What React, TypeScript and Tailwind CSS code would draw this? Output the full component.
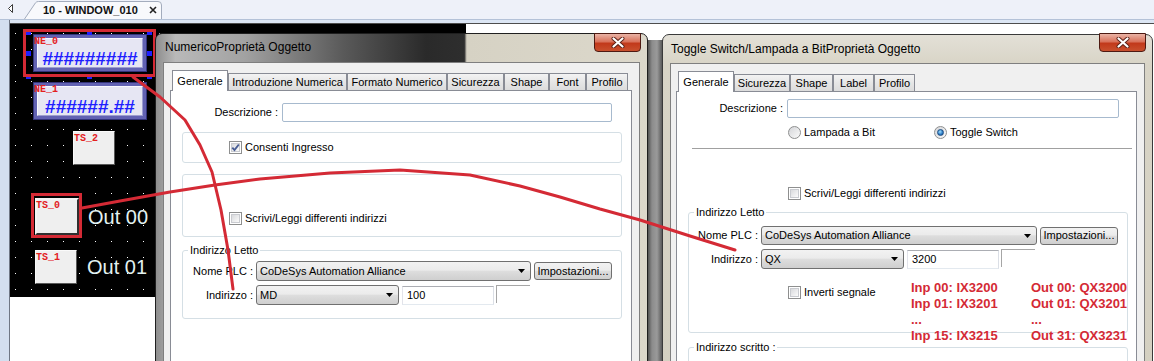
const red = "#d42a35";

function Check({ checked = false }: { checked?: boolean }) {
  return (
    <span className="relative inline-flex h-[13px] w-[13px] shrink-0 items-center justify-center border border-[#8e8f8f] bg-white">
      <span className="h-[9px] w-[9px] border border-[#c9cbd0] bg-gradient-to-br from-[#d9dadd] to-[#fbfbfb]" />
      {checked && (
        <svg className="absolute left-0 top-0" width="11" height="11" viewBox="0 0 11 11">
          <path d="M2.3 5.6 L4.5 8.1 L8.8 2.5" fill="none" stroke="#485d94" strokeWidth="1.9" />
        </svg>
      )}
    </span>
  );
}

function Radio({ on = false }: { on?: boolean }) {
  return (
    <span className="inline-flex h-[13px] w-[13px] shrink-0 items-center justify-center rounded-full border border-[#8e8f8f] bg-gradient-to-br from-[#d4d5d8] to-[#fbfbfb]">
      {on && (
        <span className="h-[7px] w-[7px] rounded-full border border-[#1b4c82] bg-[radial-gradient(circle_at_40%_35%,#9fe0ff,#2b79c4_60%,#174f8c)]" />
      )}
    </span>
  );
}

function Arrow() {
  return (
    <svg width="7" height="4" viewBox="0 0 7 4" className="shrink-0">
      <polygon points="0,0 7,0 3.5,4" fill="#000" />
    </svg>
  );
}

function Combo({ value, className }: { value: string; className: string }) {
  return (
    <div
      className={`flex shrink-0 items-center justify-between rounded-[3px] border border-[#707070] bg-[linear-gradient(#f2f2f2,#ebebeb_45%,#dddddd_52%,#cfcfcf)] pl-[3px] pr-[5px] ${className}`}
    >
      <span className="whitespace-nowrap">{value}</span>
      <Arrow />
    </div>
  );
}

function TextBox({ value = "", className }: { value?: string; className: string }) {
  return (
    <div
      className={`flex shrink-0 items-center border border-[#abadb3] border-b-[#e3e9ef] border-l-[#e2e3ea] border-r-[#dbdfe6] bg-white pl-[4px] ${className}`}
    >
      {value}
    </div>
  );
}

function Partial() {
  return <div className="ml-[2px] h-[18px] w-[34px] shrink-0 self-start border-l border-t border-[#a6a6a6]" />;
}

function Btn({ label }: { label: string }) {
  return (
    <div className="ml-[3px] flex h-[18px] w-[78px] shrink-0 items-center justify-center rounded-[3px] border border-[#707070] bg-[linear-gradient(#f2f2f2,#ebebeb_45%,#dddddd_52%,#cfcfcf)]">
      {label}
    </div>
  );
}

function Tab({ label, active = false, w }: { label: string; active?: boolean; w: string }) {
  if (active) {
    return (
      <div
        className={`relative z-10 -mb-px flex h-[21px] shrink-0 items-center justify-center border border-b-0 border-[#898c95] bg-white ${w}`}
      >
        {label}
      </div>
    );
  }
  return (
    <div
      className={`flex h-[17px] shrink-0 items-center justify-center border border-b-0 border-[#898c95] bg-[linear-gradient(#f3f3f3,#e6e6e6_50%,#dcdcdc)] ${w}`}
    >
      {label}
    </div>
  );
}

function CloseBtn({ className }: { className: string }) {
  return (
    <div
      className={`flex h-[19px] w-[47px] shrink-0 items-center justify-center rounded-b-[4px] border border-[#4e1a12] bg-[linear-gradient(#eab4a6,#d9735c_45%,#c2391b_55%,#c8502e)] ${className}`}
    >
      <svg width="14" height="11" viewBox="0 0 14 11">
        <path d="M2.5 1.5 L11.5 9.5 M11.5 1.5 L2.5 9.5" stroke="#5a2016" strokeWidth="4" strokeLinecap="round" />
        <path d="M2.5 1.5 L11.5 9.5 M11.5 1.5 L2.5 9.5" stroke="#fff" strokeWidth="2.2" strokeLinecap="round" />
      </svg>
    </div>
  );
}

function Legend({ text, className }: { text: string; className: string }) {
  return (
    <span className={`absolute top-[-7px] bg-white px-[2px] leading-[13px] ${className}`}>{text}</span>
  );
}

function TabStrip() {
  return (
    <div className="flex h-[20px] shrink-0 items-end border-b border-[#b4c2d8] bg-[#eef1f9]">
      <svg width="24" height="19" viewBox="0 0 24 19" className="shrink-0">
        <path d="M12.5 4.5 L8.5 8.5 L12.5 12.5 Z" fill="#fff" stroke="#3a3a3a" />
      </svg>
      <div className="relative flex h-[18px] w-[138px] shrink-0 items-center pl-[19px]">
        <svg className="absolute inset-0" width="138" height="18" viewBox="0 0 138 18">
          <path d="M0.5 18 L11.5 1.8 Q12.5 0.5 14.5 0.5 L134 0.5 Q137.5 0.5 137.5 4 L137.5 18" fill="#f8f9fc" stroke="#a3acbd" />
        </svg>
        <span className="relative text-[11px] font-bold text-[#111]">10 - WINDOW_010</span>
        <svg className="relative ml-[11px]" width="8" height="8" viewBox="0 0 8 8">
          <path d="M1 1 L7 7 M7 1 L1 7" stroke="#222" strokeWidth="1.6" />
        </svg>
      </div>
    </div>
  );
}

function NumBox({ className, text }: { className: string; text: string }) {
  return (
    <div className={`absolute left-[23px] h-[38px] w-[114px] border border-[#33337a] bg-[#6262b2] p-[3px] ${className}`}>
      <div className="flex h-full items-end justify-center border border-[#9d9dcf] border-l-[#fafaff] border-t-[#fafaff] bg-[#e6e6f3] text-[19px] font-bold leading-[16px] text-[#1e1eff]">
        {text}
      </div>
    </div>
  );
}

const tag = "absolute font-['Liberation_Mono',monospace] text-[10px] font-bold leading-none text-[#e3201e]";

function Canvas() {
  const handles: [number, number][] = [
    [16, 6], [77, 6], [137, 6], [16, 27], [137, 27], [16, 50], [77, 50], [137, 50],
  ];
  return (
    <div className="relative h-[273px] w-[456px] bg-black">
      <svg className="absolute inset-0" width="456" height="273">
        <defs>
          <pattern id="dots" x="5" y="9" width="16" height="16" patternUnits="userSpaceOnUse">
            <rect width="1" height="1" fill="#fff" />
          </pattern>
        </defs>
        <rect width="456" height="273" fill="url(#dots)" />
      </svg>

      <NumBox className="top-[10px]" text="#########" />
      <NumBox className="top-[58px]" text="######.##" />
      {handles.map(([x, y]) => (
        <span key={`${x}-${y}`} className="absolute h-[5px] w-[5px] bg-[#2020ff]" style={{ left: x, top: y }} />
      ))}
      <span className={`${tag} left-[24px] top-[13px]`}>NE_0</span>
      <span className={`${tag} left-[24px] top-[61px]`}>NE_1</span>

      <div className="absolute left-[63px] top-[107px] h-[34px] w-[42px] border border-[#fafafa] border-b-[#585858] border-r-[#585858] bg-[#efefef]" />
      <span className={`${tag} left-[64px] top-[110px]`}>TS_2</span>

      <div className="absolute left-[25px] top-[174px] h-[37px] w-[44px] border-2 border-[#f5f5f5] border-b-[#303030] border-r-[#303030] bg-[#efefef]" />
      <span className={`${tag} left-[26px] top-[177px]`}>TS_0</span>
      <span className="absolute left-[78px] top-[181px] text-[20px] leading-[24px] text-[#e2f1f1]">Out 00</span>

      <div className="absolute left-[25px] top-[226px] h-[34px] w-[42px] border border-[#fafafa] border-b-[#585858] border-r-[#585858] bg-[#efefef]" />
      <span className={`${tag} left-[26px] top-[229px]`}>TS_1</span>
      <span className="absolute left-[77px] top-[231px] text-[20px] leading-[24px] text-[#e2f1f1]">Out 01</span>

      <div className="absolute left-[13px] top-[5px] h-[48px] w-[133px] border-[3px] border-[#d42a35]" />
      <div className="absolute left-[21px] top-[169px] h-[45px] w-[51px] border-[3px] border-[#d42a35]" />
    </div>
  );
}

function LeftDialog() {
  return (
    <div className="absolute left-[155px] top-[33px] flex h-[340px] w-[493px] flex-col rounded-t-[7px] border border-[#1f1f1f] bg-[linear-gradient(90deg,#8e8e8e_0%,#b9b9b9_4%,#a2a2a2_18%,#5a5a5a_38%,#2a2a2a_55%,#2e2e2e_62.8%,#d6d2c4_63.3%,#dcd8cb_100%)] px-[7px]">
      <div className="flex h-[28px] shrink-0 items-start justify-between">
        <span className="mt-[6px] pl-[2px] text-[12px] leading-[14px] text-black">NumericoProprietà Oggetto</span>
        <CloseBtn className="-mr-px -mt-px" />
      </div>
      <div className="flex flex-1 flex-col border border-[#7f7f7f] bg-[#f0f0f0] pl-[6px] pr-[7px] pt-[7px]">
        <div className="flex h-[20px] shrink-0 items-end pl-[2px]">
          <Tab label="Generale" active w="w-[56px]" />
          <Tab label="Introduzione Numerica" w="w-[119px]" />
          <Tab label="Formato Numerico" w="w-[100px]" />
          <Tab label="Sicurezza" w="w-[57px]" />
          <Tab label="Shape" w="w-[45px]" />
          <Tab label="Font" w="w-[37px]" />
          <Tab label="Profilo" w="w-[42px]" />
        </div>
        <div className="flex flex-1 flex-col border border-[#898c95] bg-white">
          <div className="mt-[12px] flex items-center">
            <span className="w-[107px] text-right">Descrizione :</span>
            <div className="ml-[4px] h-[19px] w-[330px] rounded-[2px] border border-[#a7bace] bg-white" />
          </div>
          <div className="ml-[11px] mt-[10px] flex h-[31px] w-[440px] items-center rounded-[3px] border border-[#d5dfe5] pl-[46px]">
            <Check checked />
            <span className="ml-[3px]">Consenti Ingresso</span>
          </div>
          <div className="ml-[11px] mt-[11px] flex h-[63px] w-[440px] items-start rounded-[3px] border border-[#d5dfe5] pl-[46px] pt-[37px]">
            <Check />
            <span className="ml-[3px] leading-[13px]">Scrivi/Leggi differenti indirizzi</span>
          </div>
          <div className="relative ml-[11px] mt-[13px] flex h-[69px] w-[440px] flex-col rounded-[3px] border border-[#d5dfe5] pt-[10px]">
            <Legend text="Indirizzo Letto" className="left-[5px]" />
            <div className="flex items-center">
              <span className="w-[70px] text-right">Nome PLC :</span>
              <Combo value="CoDeSys Automation Alliance" className="ml-[3px] h-[20px] w-[275px]" />
              <Btn label="Impostazioni..." />
            </div>
            <div className="mt-[4px] flex items-center">
              <span className="w-[70px] text-right">Indirizzo :</span>
              <Combo value="MD" className="ml-[3px] h-[20px] w-[143px]" />
              <TextBox value="100" className="ml-[3px] h-[19px] w-[92px]" />
              <Partial />
            </div>
          </div>
        </div>
      </div>
    </div>
  );
}

function RightDialog() {
  return (
    <div className="absolute left-[662px] top-[34px] flex h-[340px] w-[491px] flex-col rounded-t-[7px] border border-[#3a3a3a] bg-[linear-gradient(#e3e0d7,#d8d4c6_30px,#d4d0c1)] px-[7px]">
      <div className="flex h-[28px] shrink-0 items-start justify-between">
        <span className="mt-[7px] pl-[1px] text-[12px] leading-[14px] text-black">Toggle Switch/Lampada a BitProprietà Oggetto</span>
        <CloseBtn className="-mr-[1px] -mt-[2px]" />
      </div>
      <div className="flex flex-1 flex-col border border-[#7f7f7f] bg-[#f0f0f0] pl-[5px] pr-[7px] pt-[8px]">
        <div className="flex h-[19px] shrink-0 items-end pl-[2px]">
          <Tab label="Generale" active w="w-[56px]" />
          <Tab label="Sicurezza" w="w-[56px]" />
          <Tab label="Shape" w="w-[43px]" />
          <Tab label="Label" w="w-[41px]" />
          <Tab label="Profilo" w="w-[41px]" />
        </div>
        <div className="flex flex-1 flex-col border border-[#898c95] bg-white">
          <div className="mt-[7px] flex items-center">
            <span className="w-[106px] text-right">Descrizione :</span>
            <div className="ml-[4px] h-[19px] w-[332px] rounded-[2px] border border-[#a7bace] bg-white" />
          </div>
          <div className="mt-[8px] flex h-[13px] items-center pl-[111px]">
            <div className="flex w-[146px] items-center">
              <Radio />
              <span className="ml-[3px]">Lampada a Bit</span>
            </div>
            <Radio on />
            <span className="ml-[3px]">Toggle Switch</span>
          </div>
          <div className="ml-[15px] mt-[9px] w-[440px] border-b border-t border-b-white border-t-[#a0a0a0]" />
          <div className="mt-[37px] flex items-center pl-[111px]">
            <Check />
            <span className="ml-[3px] leading-[13px]">Scrivi/Leggi differenti indirizzi</span>
          </div>
          <div className="relative ml-[11px] mt-[12px] flex h-[121px] w-[440px] flex-col rounded-[3px] border border-[#d5dfe5] pt-[13px]">
            <Legend text="Indirizzo Letto" className="left-[5px]" />
            <div className="flex items-center">
              <span className="w-[69px] text-right">Nome PLC :</span>
              <Combo value="CoDeSys Automation Alliance" className="ml-[3px] h-[19px] w-[276px]" />
              <Btn label="Impostazioni..." />
            </div>
            <div className="mt-[4px] flex items-center">
              <span className="w-[69px] text-right">Indirizzo :</span>
              <Combo value="QX" className="ml-[3px] h-[20px] w-[143px]" />
              <TextBox value="3200" className="ml-[3px] h-[19px] w-[92px]" />
              <Partial />
            </div>
            <div className="mt-[17px] flex items-center pl-[99px]">
              <Check />
              <span className="ml-[3px] leading-[13px]">Inverti segnale</span>
            </div>
          </div>
          <div className="relative ml-[11px] mt-[14px] h-[40px] w-[440px] rounded-[3px] border border-[#d5dfe5]">
            <Legend text="Indirizzo scritto :" className="left-[5px]" />
          </div>
        </div>
      </div>
      <div className="absolute left-[248px] top-[245px] flex text-[13px] font-bold leading-[16px] text-[#d42a35]">
        <div className="w-[120px]">
          <div>Inp 00: IX3200</div>
          <div>Inp 01: IX3201</div>
          <div>...</div>
          <div>Inp 15: IX3215</div>
        </div>
        <div>
          <div>Out 00: QX3200</div>
          <div>Out 01: QX3201</div>
          <div>...</div>
          <div>Out 31: QX3231</div>
        </div>
      </div>
    </div>
  );
}

function Annotations() {
  const p1 = "133,77 160,97 185,120 200,145 212,172 221,210 228,250 233,289";
  const p2 =
    "82,208 120,201 170,192 215,185 260,179 330,173 400,170 470,175 520,186 560,197 600,209 640,220 690,236 735,250";
  return (
    <svg className="pointer-events-none absolute inset-0" width="1154" height="361" viewBox="0 0 1154 361">
      <polyline points={p1} fill="none" stroke={red} strokeWidth="3" strokeLinejoin="round" strokeLinecap="round" />
      <polyline points={p2} fill="none" stroke={red} strokeWidth="3" strokeLinejoin="round" strokeLinecap="round" />
    </svg>
  );
}

export default function App() {
  return (
    <div className="relative flex h-[361px] w-[1154px] flex-col overflow-hidden bg-white font-['Liberation_Sans',Arial,sans-serif] text-[11px] text-black">
      <TabStrip />
      <div className="flex flex-1">
        <div className="w-[10px] shrink-0 border-r border-[#6f7785] bg-[#d3dff0]" />
        <div className="flex flex-1 flex-col">
          <div className="h-[3px] shrink-0 bg-[#dce6f4]" />
          <div className="flex-1 border-t border-[#4d4d4d] bg-white">
            <Canvas />
          </div>
        </div>
      </div>
      <div className="absolute left-[645px] top-[40px] h-[321px] w-[20px] bg-[linear-gradient(90deg,#2a2a2a,#8c8c8c_35%,#9a9a9a_60%,#333_100%)]" />
      <LeftDialog />
      <RightDialog />
      <Annotations />
    </div>
  );
}
